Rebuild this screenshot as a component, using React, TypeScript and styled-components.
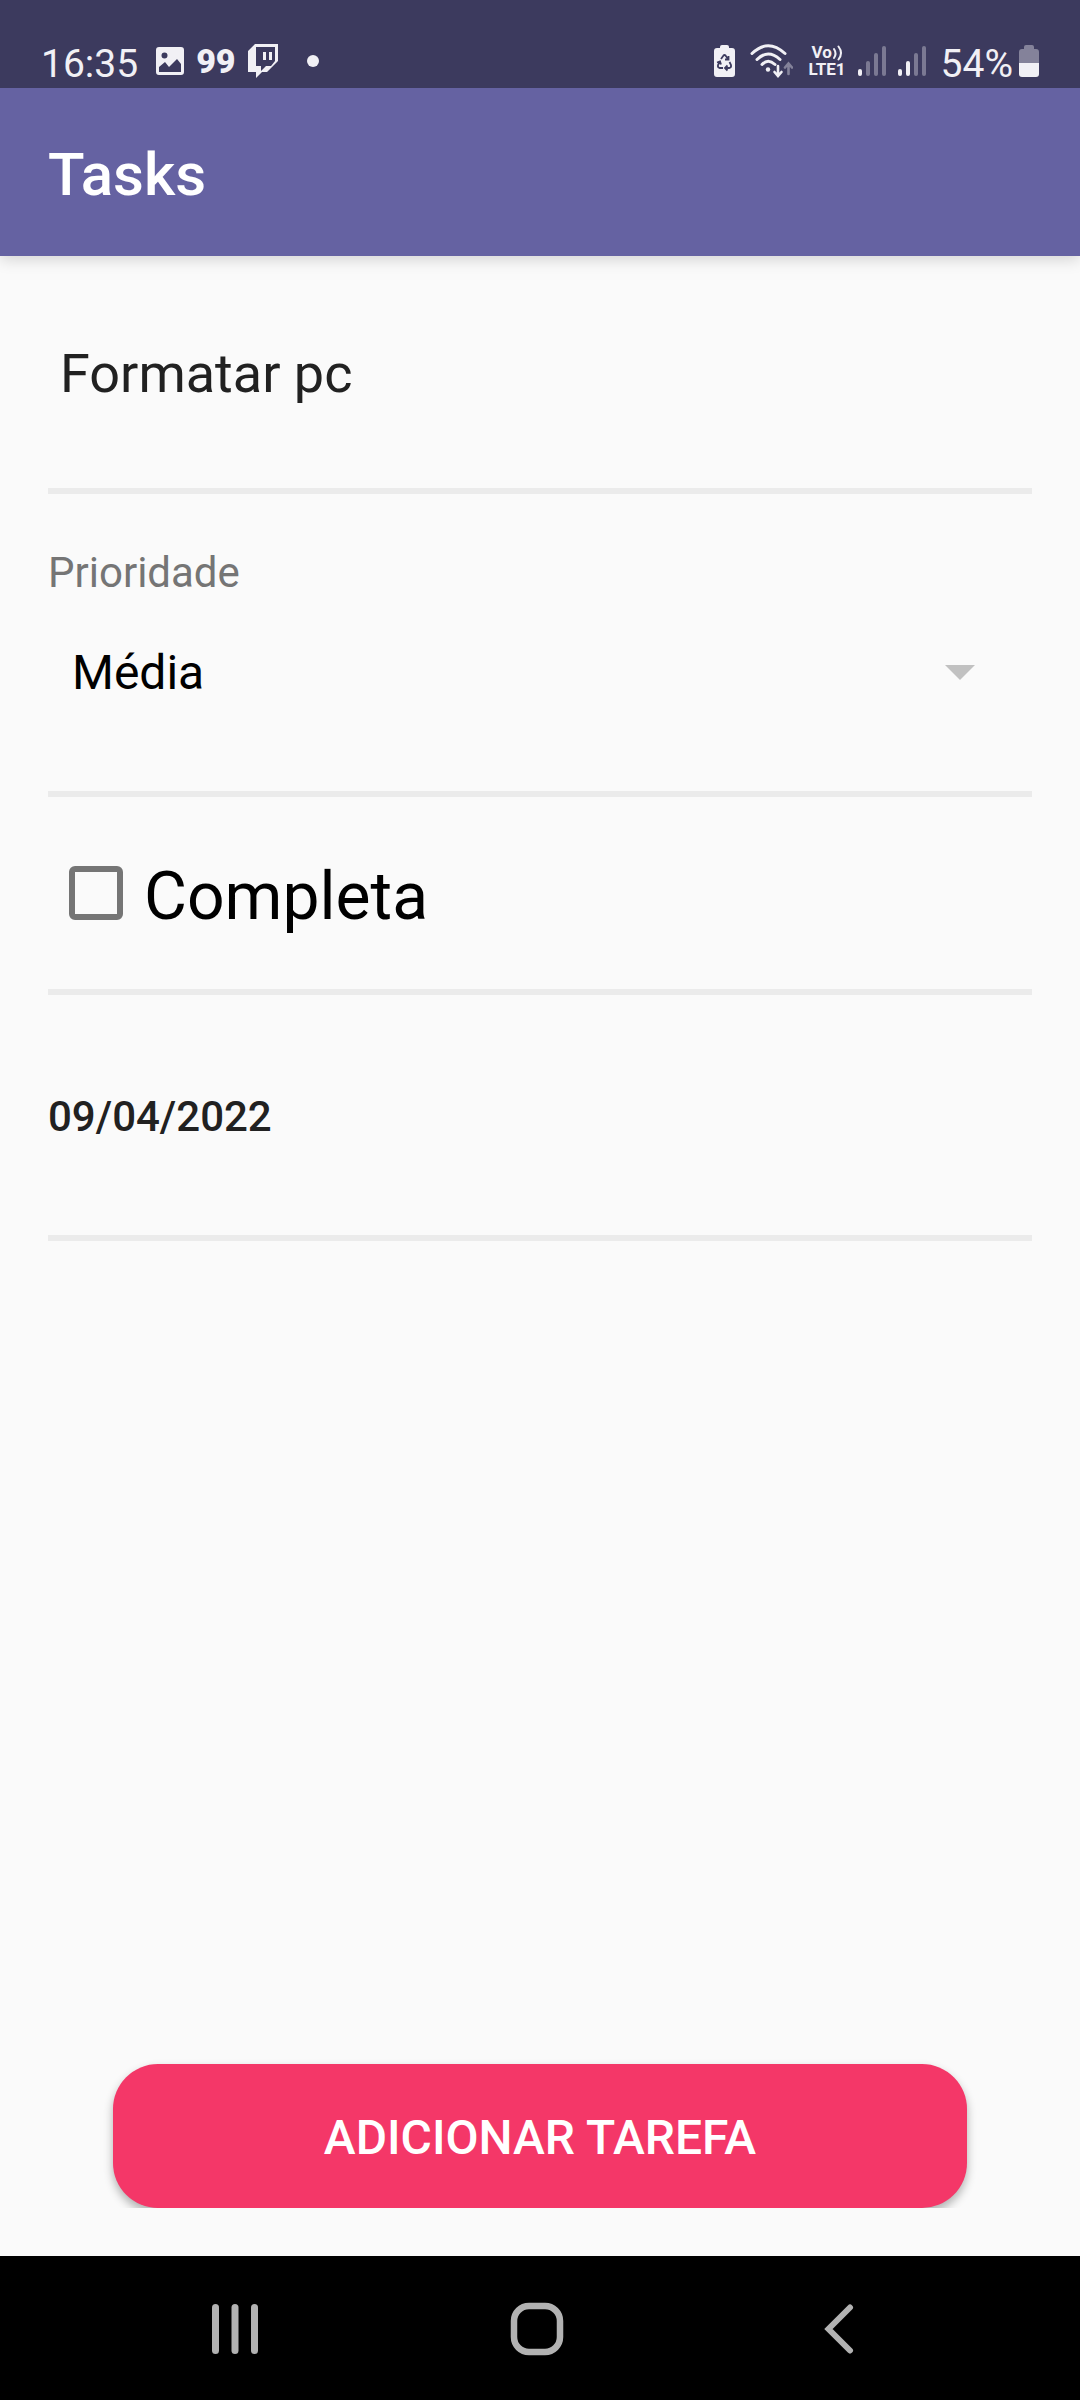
import React, { useState } from "react";
import styled, { createGlobalStyle } from "styled-components";

const GlobalStyle = createGlobalStyle`
  *, *::before, *::after { box-sizing: border-box; }
  body { margin: 0; background: #fafafa; }
  body, button, input, select { font-family: Roboto, "Noto Sans", sans-serif; }
`;

const Screen = styled.div`
  display: flex;
  flex-direction: column;
  min-height: 100vh;
  background: #fafafa;
`;

const StatusBar = styled.div`
  position: relative;
  z-index: 1;
  display: flex;
  justify-content: space-between;
  height: 88px;
  padding: 34px 41px 0;
  background: #3c3a5e;
  color: #f1f0f5;
`;

const StatusGroup = styled.div<{ $gap: number }>`
  display: flex;
  align-items: center;
  height: 54px;
  gap: ${(p) => p.$gap}px;

  svg { display: block; flex: none; fill: currentColor; }
`;

const StatusText = styled.span`
  font-size: 39px;
  line-height: 54px;
  padding-top: 6px;
`;

const Clock = styled(StatusText)`
  margin-right: 6px;
`;

const AppBadge = styled.span`
  font-size: 34px;
  font-weight: 900;
  line-height: 54px;
`;

const Network = styled.span`
  display: flex;
  flex-direction: column;
  font-size: 17px;
  font-weight: 700;
  line-height: 17px;
`;

const NetworkLine = styled.span`
  display: flex;
  align-items: center;
  padding-left: 3px;
`;

const Toolbar = styled.header`
  display: flex;
  align-items: center;
  height: 168px;
  padding: 6px 48px 0;
  background: #6562a2;
  box-shadow: 0 4px 14px rgba(0, 0, 0, 0.15);
`;

const Title = styled.h1`
  margin: 0;
  color: #fff;
  font-size: 60px;
  font-weight: 500;
  line-height: 72px;
`;

const Form = styled.form`
  display: flex;
  flex: 1;
  flex-direction: column;
`;

const Section = styled.div<{ $top?: number; $bottom?: number }>`
  display: flex;
  flex-direction: column;
  margin: 0 48px;
  padding: ${(p) => p.$top ?? 0}px 0 ${(p) => p.$bottom ?? 0}px;
  border-bottom: 6px solid #ebebeb;
`;

const NameInput = styled.input`
  width: 100%;
  height: 68px;
  padding: 0 12px;
  border: 0;
  outline: 0;
  background: transparent;
  color: #212121;
  font-size: 54px;
  line-height: 68px;
`;

const FieldLabel = styled.label`
  color: #757575;
  font-size: 42px;
  line-height: 50px;
`;

const SelectBox = styled.div`
  display: grid;
  align-items: center;
  margin-top: 24px;

  > * { grid-area: 1 / 1; }
`;

const Select = styled.select`
  appearance: none;
  width: 100%;
  height: 100px;
  padding: 0 24px;
  border: 0;
  outline: 0;
  background: transparent;
  color: #000;
  font-size: 48px;
`;

const Arrow = styled.svg`
  justify-self: end;
  margin-right: 57px;
  fill: #c1c1c1;
  pointer-events: none;
`;

const CheckRow = styled.label`
  display: flex;
  align-items: center;
  gap: 21px;
  height: 192px;
  padding-left: 21px;
  color: #000;
  font-size: 66px;
  line-height: 80px;
`;

const Checkbox = styled.input`
  appearance: none;
  width: 54px;
  height: 54px;
  margin: 0;
  border: 6px solid #757575;
  border-radius: 6px;

  &:checked { background: #757575; }
`;

const CheckText = styled.span`
  padding-top: 8px;
`;

const DateButton = styled.button`
  align-self: flex-start;
  padding: 0;
  border: 0;
  background: transparent;
  color: #212121;
  font-size: 42px;
  font-weight: 500;
  line-height: 50px;
`;

const Actions = styled.div`
  margin: auto 0 48px;
  padding: 16px 113px 0;
  overflow: hidden;
`;

const SubmitButton = styled.button`
  display: block;
  width: 100%;
  height: 144px;
  padding: 2px 0 0;
  border: 0;
  border-radius: 45px;
  background: #f43768;
  box-shadow: 0 5px 10px rgba(0, 0, 0, 0.3);
  color: #fff;
  font-size: 48px;
  font-weight: 500;
  text-transform: uppercase;
`;

const NavBar = styled.nav`
  display: grid;
  grid-template-columns: repeat(3, 1fr);
  height: 144px;
  padding: 2px 90px 0 84px;
  background: #000;
`;

const NavButton = styled.button`
  display: grid;
  place-items: center;
  padding: 0;
  border: 0;
  background: transparent;
  color: #b2b2b2;
`;

const Signal = ({ level }: { level: number }) => (
  <svg width="28" height="32" viewBox="0 0 28 32">
    {[7, 15, 23, 30].map((h, i) => (
      <rect key={h} x={i * 8} y={31 - h} width="4" height={h} rx="2" opacity={i < level ? 1 : 0.35} />
    ))}
  </svg>
);

const PictureIcon = () => (
  <svg width="28" height="28" viewBox="0 0 28 28">
    <path
      fillRule="evenodd"
      d="M3 0h22a3 3 0 0 1 3 3v22a3 3 0 0 1-3 3H3a3 3 0 0 1-3-3V3a3 3 0 0 1 3-3zM3 20v5h22v-8l-4-5-8 8-4-5zM8.500 5.500a3 3 0 1 0 0 6 3 3 0 0 0 0-6z"
    />
  </svg>
);

const TwitchIcon = () => (
  <svg width="30" height="34" viewBox="0 0 30 34">
    <path
      fillRule="evenodd"
      d="M7 0h23v17L19 28h-5l-6 6v-6H0V7zM8 3v19h5v5l5-5h5l4-5V3z"
    />
    <path d="M15 8h3v8h-3zM21 8h3v8h-3z" />
  </svg>
);

const DotIcon = () => (
  <svg width="12" height="12" viewBox="0 0 12 12">
    <circle cx="6" cy="6" r="6" />
  </svg>
);

const SaverIcon = () => (
  <svg width="21" height="32" viewBox="0 0 21 32">
    <path d="M6 3V2a2 2 0 0 1 2-2h5a2 2 0 0 1 2 2v1h3a3 3 0 0 1 3 3v23a3 3 0 0 1-3 3H3a3 3 0 0 1-3-3V6a3 3 0 0 1 3-3z" />
    <g fill="none" stroke="#3c3a5e" strokeWidth="1.800">
      <path d="M7 14l2.500-3.500q1-1 2 0L14 14M14.500 11v3.500H11" />
      <path d="M15.500 17l1.500 3q.5 2.500-1.500 3h-4M13.500 20.500L11 23l2.500 2.500" />
      <path d="M9 23H5.500q-2-.5-1.500-3l2-3.500M3 17.500l3-1 1 3" />
    </g>
  </svg>
);

const WifiIcon = () => (
  <svg width="43" height="34" viewBox="0 0 43 34">
    <g fill="none" stroke="currentColor" strokeWidth="3" strokeLinecap="round">
      <path d="M2 9.500Q18-6 35 9.500" />
      <path d="M7 15.500Q18 4.500 30 15.500" />
      <path d="M12 20.500Q18 14 25 20.500" />
      <path d="M28 22v9M24.500 28l3.500 4 3.500-4" strokeWidth="2.600" />
      <path d="M38.500 30v-9.500M35 23.500l3.500-4 3.500 4" strokeWidth="2.600" opacity="0.400" />
    </g>
    <circle cx="18" cy="25.500" r="2.200" />
  </svg>
);

const WavesIcon = () => (
  <svg width="12" height="16" viewBox="0 0 12 16">
    <g fill="none" stroke="currentColor" strokeWidth="2" strokeLinecap="round">
      <path d="M2 4q3 4.500 0 9" />
      <path d="M6.500 1.500q5 6.500 0 13" />
    </g>
  </svg>
);

const BatteryIcon = () => (
  <svg width="20" height="32" viewBox="0 0 20 32">
    <path
      opacity="0.400"
      d="M5 4V2a2 2 0 0 1 2-2h6a2 2 0 0 1 2 2v2h2a3 3 0 0 1 3 3v11H0V7a3 3 0 0 1 3-3z"
    />
    <path d="M0 18h20v11a3 3 0 0 1-3 3H3a3 3 0 0 1-3-3z" />
  </svg>
);

const StatusLeft = styled(StatusGroup)`
  svg:last-child { margin-left: 17px; }
`;

const Meters = styled.span`
  display: flex;
  align-items: center;
  gap: 12px;
`;

const PowerLevel = styled.span`
  display: flex;
  align-items: center;
  gap: 6px;
`;

export default function App() {
  const [name, setName] = useState("Formatar pc");
  const [priority, setPriority] = useState("Média");
  const [done, setDone] = useState(false);

  return (
    <>
      <GlobalStyle />
      <Screen>
        <StatusBar>
          <StatusLeft $gap={12}>
            <Clock>16:35</Clock>
            <PictureIcon />
            <AppBadge>99</AppBadge>
            <TwitchIcon />
            <DotIcon />
          </StatusLeft>
          <StatusGroup $gap={15}>
            <SaverIcon />
            <WifiIcon />
            <Meters>
              <Network>
                <NetworkLine>
                  Vo
                  <WavesIcon />
                </NetworkLine>
                <span>LTE1</span>
              </Network>
              <Signal level={1} />
              <Signal level={2} />
            </Meters>
            <PowerLevel>
              <StatusText>54%</StatusText>
              <BatteryIcon />
            </PowerLevel>
          </StatusGroup>
        </StatusBar>

        <Toolbar>
          <Title>Tasks</Title>
        </Toolbar>

        <Form onSubmit={(e) => e.preventDefault()}>
          <Section $top={84} $bottom={80}>
            <NameInput
              aria-label="Tarefa"
              value={name}
              onChange={(e) => setName(e.target.value)}
            />
          </Section>

          <Section $top={54} $bottom={69}>
            <FieldLabel htmlFor="priority">Prioridade</FieldLabel>
            <SelectBox>
              <Select
                id="priority"
                value={priority}
                onChange={(e) => setPriority(e.target.value)}
              >
                <option>Baixa</option>
                <option>Média</option>
                <option>Alta</option>
              </Select>
              <Arrow width="30" height="15" viewBox="0 0 30 15" aria-hidden="true">
                <path d="M0 0h30L15 15z" />
              </Arrow>
            </SelectBox>
          </Section>

          <Section>
            <CheckRow>
              <Checkbox
                type="checkbox"
                checked={done}
                onChange={(e) => setDone(e.target.checked)}
              />
              <CheckText>Completa</CheckText>
            </CheckRow>
          </Section>

          <Section $top={97} $bottom={93}>
            <DateButton type="button">09/04/2022</DateButton>
          </Section>

          <Actions>
            <SubmitButton type="submit">Adicionar tarefa</SubmitButton>
          </Actions>
        </Form>

        <NavBar>
          <NavButton type="button" aria-label="Recentes">
            <svg width="46" height="50" viewBox="0 0 46 50" fill="currentColor">
              <rect x="0" width="7" height="50" rx="3.500" />
              <rect x="19.500" width="7" height="50" rx="3.500" />
              <rect x="39" width="7" height="50" rx="3.500" />
            </svg>
          </NavButton>
          <NavButton type="button" aria-label="Início">
            <svg width="54" height="54" viewBox="0 0 54 54" fill="none" stroke="currentColor" strokeWidth="6.500">
              <rect x="4" y="4" width="46" height="46" rx="15" />
            </svg>
          </NavButton>
          <NavButton type="button" aria-label="Voltar">
            <svg
              width="30"
              height="50"
              viewBox="0 0 30 50"
              fill="none"
              stroke="currentColor"
              strokeWidth="6"
              strokeLinecap="round"
            >
              <path d="M26 3.500L4.500 25 26 46.500" />
            </svg>
          </NavButton>
        </NavBar>
      </Screen>
    </>
  );
}
